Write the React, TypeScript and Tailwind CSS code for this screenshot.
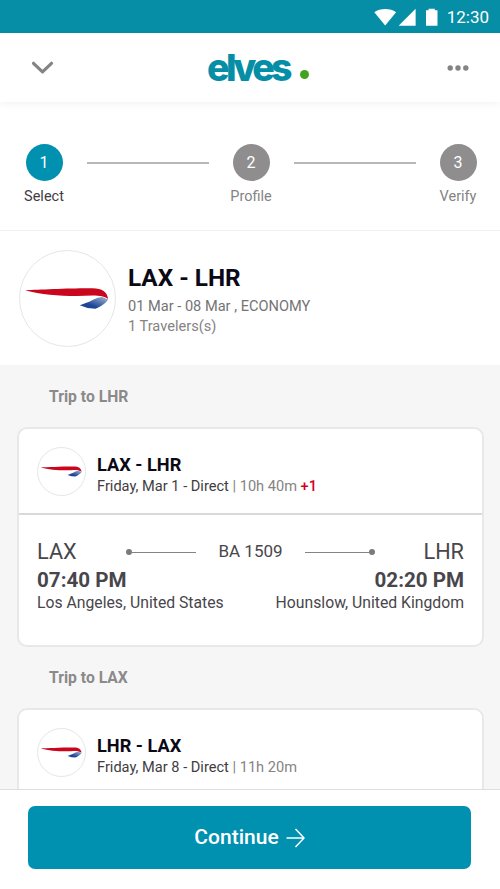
import React from 'react';

interface Step {
  id: number;
  label: string;
  active?: boolean;
}

interface Flight {
  number: string;
  from: string;
  to: string;
  departure: string;
  arrival: string;
  origin: string;
  destination: string;
}

interface Trip {
  heading: string;
  route: string;
  date: string;
  duration: string;
  extraDays?: string;
  flight?: Flight;
}

const steps: Step[] = [
  { id: 1, label: 'Select', active: true },
  { id: 2, label: 'Profile' },
  { id: 3, label: 'Verify' },
];

const trips: Trip[] = [
  {
    heading: 'Trip to LHR',
    route: 'LAX - LHR',
    date: 'Friday, Mar 1 - Direct',
    duration: '10h 40m',
    extraDays: '+1',
    flight: {
      number: 'BA 1509',
      from: 'LAX',
      to: 'LHR',
      departure: '07:40 PM',
      arrival: '02:20 PM',
      origin: 'Los Angeles, United States',
      destination: 'Hounslow, United Kingdom',
    },
  },
  {
    heading: 'Trip to LAX',
    route: 'LHR - LAX',
    date: 'Friday, Mar 8 - Direct',
    duration: '11h 20m',
  },
];

const StatusBar: React.FC = () => (
  <div className="flex h-[33px] shrink-0 items-center justify-end bg-[#058ea6] pr-[11px] text-white">
    <svg className="h-[18px] w-[64px]" viewBox="0 0 64 18" fill="currentColor">
      <path d="M0.300 4.200C6.300 0 16.300 0 22.100 4.200L11.200 17.500Z" />
      <path d="M41.600 0.800V17.700H24.600Z" />
      <path d="M52 2.300H54.600V0.800H60.800V2.300H63.500V17.700H52Z" />
    </svg>
    <span className="ml-[9px] pt-[1px] text-[17px] leading-none">12:30</span>
  </div>
);

const Header: React.FC = () => (
  <header className="z-10 flex h-[69px] shrink-0 items-center justify-between bg-white px-[31px] shadow-[0_2px_8px_rgba(0,0,0,0.05)]">
    <svg className="h-[14px] w-[23px]" viewBox="0 0 23 14" fill="none" stroke="#858384" strokeWidth={3.2}>
      <path d="M2.500 2.300L11.500 10.800L20.500 2.300" strokeLinecap="round" strokeLinejoin="round" />
    </svg>
    <div className="flex items-baseline pl-[15px]">
      <span className="font-['Inter',sans-serif] text-[37.500px] leading-none font-extrabold tracking-[-3.600px] text-[#058ea6]">
        elves
      </span>
      <span className="mb-[7px] ml-[11px] size-[9px] self-end rounded-full bg-[#43a321]"></span>
    </div>
    <svg className="h-[6px] w-[22px]" viewBox="0 0 22 6" fill="#858384">
      <circle cx="3.200" cy="3" r="2.700" />
      <circle cx="11" cy="3" r="2.700" />
      <circle cx="18.800" cy="3" r="2.700" />
    </svg>
  </header>
);

const Stepper: React.FC = () => (
  <div className="flex h-[129px] shrink-0 items-start justify-between border-b border-[#f0f0f0] pt-[42px] pr-[17px] pl-[19px]">
    {steps.map((step, index) => (
      <React.Fragment key={step.id}>
        {index > 0 && <div className="mt-[18px] h-[2px] w-[122px] bg-[#b9b7b8]"></div>}
        <div className="flex w-[50px] flex-col items-center">
          <div
            className={`flex size-[37px] items-center justify-center rounded-full text-[16px] text-white ${
              step.active ? 'bg-[#0091b0]' : 'bg-[#8f8d8e]'
            }`}
          >
            {step.id}
          </div>
          <span
            className={`mt-[7px] text-[14.500px] leading-[18px] ${
              step.active ? 'text-[#3f3d42]' : 'text-[#858384]'
            }`}
          >
            {step.label}
          </span>
        </div>
      </React.Fragment>
    ))}
  </div>
);

const AirlineLogo: React.FC<{ large?: boolean }> = ({ large }) => (
  <div
    className={`shrink-0 overflow-hidden rounded-full border border-[#e6e6e6] bg-white ${
      large ? 'size-[97px]' : 'size-[49px]'
    }`}
  >
    <svg className="size-full" viewBox="0 0 97 97">
      <defs>
        <linearGradient id="ribbon" x1="0" y1="1" x2="1" y2="0">
          <stop offset="0.350" stopColor="#1d4794" />
          <stop offset="1" stopColor="#a9b8d8" />
        </linearGradient>
      </defs>
      <path
        d="M5.500 40C20 39.500 50 37.800 74 38C84 38 89 41.500 90 49C86 46.500 82 45.500 74 45.500C50 46.500 25 45.500 5.500 40Z"
        fill="#c9061c"
      />
      <path d="M61 55.500L70 52C75 50 79 47 84 47L90 49.500C88 53 82 57 77 59L69 58.200Z" fill="url(#ribbon)" />
    </svg>
  </div>
);

const Summary: React.FC = () => (
  <section className="flex h-[134px] shrink-0 items-center gap-[12px] bg-white pl-[19px]">
    <AirlineLogo large />
    <div className="pt-[2px]">
      <h1 className="text-[24.300px] leading-[30px] font-bold text-[#0b0916]">LAX - LHR</h1>
      <p className="mt-[3px] text-[14.600px] leading-[20px] text-[#757374]">01 Mar - 08 Mar , ECONOMY</p>
      <p className="text-[14.600px] leading-[20px] text-[#858384]">1 Travelers(s)</p>
    </div>
  </section>
);

const FlightDetails: React.FC<{ flight: Flight }> = ({ flight }) => (
  <div className="px-[18px] pt-[24px] text-[#48464b]">
    <div className="flex h-[26px] items-center justify-between">
      <span className="w-[45px] text-[21.700px]">{flight.from}</span>
      <div className="flex items-center gap-[22px]">
        <div className="flex items-center">
          <span className="size-[6px] rounded-full bg-[#7c7a7b]"></span>
          <span className="h-px w-[64px] bg-[#858384]"></span>
        </div>
        <span className="text-[17px]">{flight.number}</span>
        <div className="flex items-center">
          <span className="h-px w-[64px] bg-[#858384]"></span>
          <span className="size-[6px] rounded-full bg-[#7c7a7b]"></span>
        </div>
      </div>
      <span className="w-[45px] text-right text-[21.700px]">{flight.to}</span>
    </div>
    <div className="mt-[1px] flex justify-between text-[20.600px] leading-[28px] font-bold">
      <span>{flight.departure}</span>
      <span>{flight.arrival}</span>
    </div>
    <div className="flex justify-between text-[15.750px] leading-[18px]">
      <span>{flight.origin}</span>
      <span>{flight.destination}</span>
    </div>
  </div>
);

const TripCard: React.FC<{ trip: Trip }> = ({ trip }) => (
  <div className="h-[281px] shrink-0">
    <h2 className="h-[62px] pt-[22px] pl-[49px] text-[15.700px] leading-[20px] font-bold text-[#8b898a]">
      {trip.heading}
    </h2>
    <div className="mr-[16px] ml-[17px] h-[220px] rounded-[10px] border-2 border-[#e8e8e8] bg-white">
      <div className="flex h-[86px] items-center gap-[11px] border-b-2 border-[#d9d9d9] pl-[18px]">
        <AirlineLogo />
        <div className="pt-[8px]">
          <h3 className="text-[18.200px] leading-[22px] font-bold text-[#0b0916]">{trip.route}</h3>
          <p className="text-[14.600px] leading-[20px] text-[#858384]">
            <span className="text-[#3f3d42]">{trip.date}</span> | {trip.duration}{' '}
            {trip.extraDays && <span className="font-medium text-[#d0021b]">{trip.extraDays}</span>}
          </p>
        </div>
      </div>
      {trip.flight && <FlightDetails flight={trip.flight} />}
    </div>
  </div>
);

const App: React.FC = () => {
  return (
    <div className="flex h-[889px] w-[500px] flex-col overflow-hidden bg-white font-['Roboto',sans-serif]">
      <StatusBar />
      <Header />
      <Stepper />
      <Summary />
      <main className="flex min-h-0 flex-1 flex-col overflow-hidden bg-[#f6f6f6]">
        {trips.map((trip) => (
          <TripCard key={trip.heading} trip={trip} />
        ))}
      </main>
      <footer className="h-[100px] shrink-0 border-t border-[#dedede] bg-white pt-[16px] pr-[29px] pl-[28px]">
        <button className="flex h-[63px] w-full items-center justify-center gap-[7px] rounded-[7px] bg-[#0091b0] pt-[1px] text-[21px] font-medium text-white">
          <span>Continue</span>
          <svg className="h-[20px] w-[19px]" viewBox="0 0 19 20" fill="none" stroke="currentColor" strokeWidth={1.500}>
            <path d="M0.500 10H18M9.500 1L18 10L9.500 19" strokeLinejoin="round" />
          </svg>
        </button>
      </footer>
    </div>
  );
};

export default App;
